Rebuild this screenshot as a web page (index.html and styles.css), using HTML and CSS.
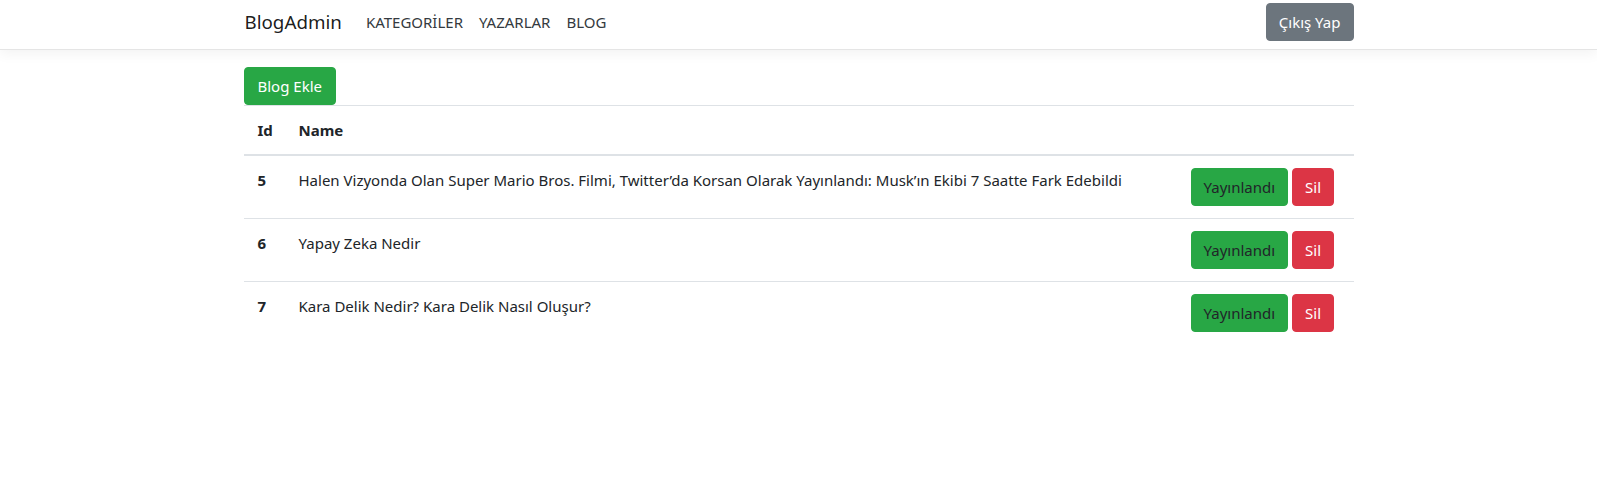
FILE: index.html
```html
<!DOCTYPE html>
<html lang="tr">
<head>
<meta charset="utf-8">
<title>BlogAdmin</title>
<link rel="stylesheet" href="styles.css">
</head>
<body>
<header class="navbar">
  <div class="container nav-inner">
    <div class="nav-left">
      <a class="brand" href="#">BlogAdmin</a>
      <ul class="nav-links">
        <li><a href="#">KATEGORİLER</a></li>
        <li><a href="#">YAZARLAR</a></li>
        <li><a href="#">BLOG</a></li>
      </ul>
    </div>
    <a class="btn btn-secondary" href="#">Çıkış Yap</a>
  </div>
</header>
<main class="container">
  <div class="toolbar"><a class="btn btn-success btn-wide" href="#">Blog Ekle</a></div>
  <table class="table">
    <thead>
      <tr><th class="col-id">Id</th><th>Name</th><th class="col-actions"></th></tr>
    </thead>
    <tbody>
      <tr>
        <td class="cell-id">5</td>
        <td class="cell-name">Halen Vizyonda Olan Super Mario Bros. Filmi, Twitter’da Korsan Olarak Yayınlandı: Musk’ın Ekibi 7 Saatte Fark Edebildi</td>
        <td><div class="actions"><a class="btn btn-success btn-dark-text" href="#">Yayınlandı</a><a class="btn btn-danger" href="#">Sil</a></div></td>
      </tr>
      <tr>
        <td class="cell-id">6</td>
        <td class="cell-name">Yapay Zeka Nedir</td>
        <td><div class="actions"><a class="btn btn-success btn-dark-text" href="#">Yayınlandı</a><a class="btn btn-danger" href="#">Sil</a></div></td>
      </tr>
      <tr>
        <td class="cell-id">7</td>
        <td class="cell-name">Kara Delik Nedir? Kara Delik Nasıl Oluşur?</td>
        <td><div class="actions"><a class="btn btn-success btn-dark-text" href="#">Yayınlandı</a><a class="btn btn-danger" href="#">Sil</a></div></td>
      </tr>
    </tbody>
  </table>
</main>
</body>
</html>
```

FILE: styles.css
```css
* { box-sizing: border-box; }
html, body { margin: 0; padding: 0; }
body {
  font-family: "Noto Sans", "Open Sans", sans-serif;
  font-size: 15px;
  line-height: 24px;
  color: #212529;
  background: #fff;
}
a { text-decoration: none; }
.container {
  width: 1140px;
  margin: 0 auto;
  padding: 0 15px;
}
.navbar {
  background: #fff;
  border-bottom: 1px solid #e5e5e5;
  box-shadow: 0 4px 12px rgba(0,0,0,.05);
  height: 50px;
}
.nav-inner {
  display: flex;
  justify-content: space-between;
  align-items: center;
  padding-top: 3px;
  padding-bottom: 8px;
  height: 49px;
}
.nav-left { display: flex; align-items: center; }
.brand {
  font-size: 18.75px;
  line-height: 30px;
  color: rgba(0,0,0,.9);
  margin-right: 16px;
  padding-left: 1px;
}
.nav-links { list-style: none; margin: 0; padding: 0; display: flex; }
.nav-links a {
  display: block;
  padding: 0 8px;
  font-size: 15px;
  line-height: 24px;
  color: #343a40;
}
.btn {
  display: inline-block;
  font-size: 15px;
  line-height: 24px;
  padding: 6px 12px;
  border: 1px solid transparent;
  border-radius: 4px;
  color: #fff;
}
.btn-wide { padding-left: 13px; padding-right: 13px; }
.btn-secondary { background: #6c757d; border-color: #6c757d; }
.btn-success { background: #28a745; border-color: #28a745; }
.btn-danger { background: #dc3545; border-color: #dc3545; }
.btn-dark-text { color: #212529; }
.toolbar { display: flex; margin-top: 17px; }
.table {
  width: 100%;
  border-collapse: collapse;
}
.table th, .table td {
  padding: 12px;
  border-top: 1px solid #dee2e6;
  text-align: left;
  vertical-align: top;
}
.table thead th {
  vertical-align: bottom;
  border-bottom: 2px solid #dee2e6;
  font-weight: 700;
}
.table .col-id, .table .cell-id { padding-left: 14px; }
.col-id { width: 43px; }
.col-actions { width: 175px; }
.cell-id { font-weight: 700; }
.actions { display: flex; gap: 4px; }
```
